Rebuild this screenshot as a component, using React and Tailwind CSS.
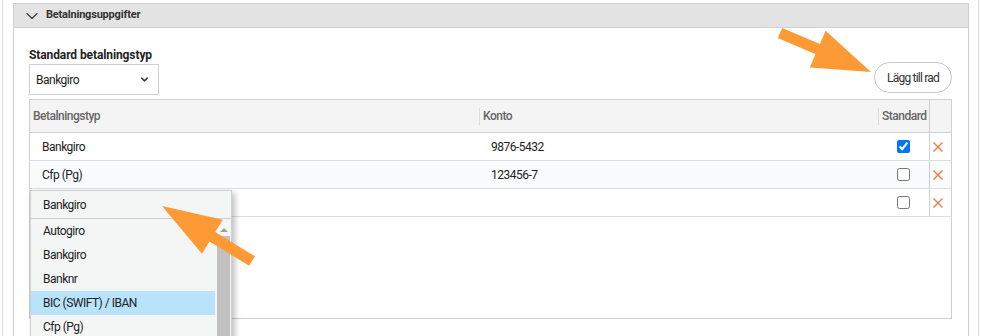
import React from 'react';
import { ChevronDown } from 'lucide-react';

const rows = [
  { typ: 'Bankgiro', konto: '9876-5432', std: true },
  { typ: 'Cfp (Pg)', konto: '123456-7', std: false, alt: true },
  { typ: '', konto: '', std: false },
];

const options = ['Autogiro', 'Bankgiro', 'Banknr', 'BIC (SWIFT) / IBAN', 'Cfp (Pg)'];

// arrow polygon from tail to tip
const arrowPoints = (tail, tip, headLen, headHalf, shaftHalf) => {
  const dx = tip[0] - tail[0];
  const dy = tip[1] - tail[1];
  const len = Math.hypot(dx, dy);
  const ux = dx / len;
  const uy = dy / len;
  const nx = -uy;
  const ny = ux;
  const bx = tip[0] - ux * headLen;
  const by = tip[1] - uy * headLen;
  const p = [
    [tail[0] + nx * shaftHalf, tail[1] + ny * shaftHalf],
    [bx + nx * shaftHalf, by + ny * shaftHalf],
    [bx + nx * headHalf, by + ny * headHalf],
    tip,
    [bx - nx * headHalf, by - ny * headHalf],
    [bx - nx * shaftHalf, by - ny * shaftHalf],
    [tail[0] - nx * shaftHalf, tail[1] - ny * shaftHalf],
  ];
  return p.map((q) => q.map((v) => v.toFixed(1)).join(',')).join(' ');
};

const DeleteX = () => (
  <svg width="10" height="10" viewBox="0 0 10 10">
    <path d="M0.5 0.5L9.5 9.5M9.5 0.5L0.5 9.5" stroke="#f2783f" strokeWidth="1.4" />
  </svg>
);

const App = () => {
  return (
    <div className="relative w-[981px] h-[336px] overflow-hidden bg-white text-[12px] text-[#222] font-['Roboto',sans-serif] tracking-[-0.5px]">
      <div className="ml-[2px] w-[977px] h-full border-l border-r border-[#dcdcdc] pl-[10px] pt-[3px]">
        <div className="w-[956px] h-[400px] border border-[#cfcfcf]">
          <div className="h-[24px] bg-[#e3e3e3] border-b border-[#cfcfcf] flex items-center pl-[8px]">
            <ChevronDown size={20} strokeWidth={1.3} className="text-[#333]" />
            <span className="ml-[4px] text-[11px] font-bold text-[#333] tracking-[-0.2px]">Betalningsuppgifter</span>
          </div>

          <div className="px-[15px] pt-[20px]">
            <div className="w-[923px] flex items-end justify-between">
              <div>
                <div className="font-bold leading-[14px] text-[#222] tracking-[-0.1px]">Standard betalningstyp</div>
                <div className="mt-[2px] w-[130px] h-[31px] border border-[#cfcfcf] flex items-center justify-between pl-[6px] pr-[8px]">
                  <span>Bankgiro</span>
                  <ChevronDown size={11} strokeWidth={3.5} className="text-[#444]" />
                </div>
              </div>
              <button className="mb-[2px] h-[31px] w-[78px] rounded-full border border-[#c8c8c8] bg-white text-[#333] tracking-[-0.8px]">
                Lägg till rad
              </button>
            </div>

            <div className="mt-[4px] w-[923px] h-[220px] border border-[#cfcfcf]">
              <div className="h-[33px] bg-[#f3f4f3] border-b border-[#cfcfcf] flex items-center font-medium text-[#666]">
                <div className="w-[449px] pl-[3px]">Betalningstyp</div>
                <div className="w-[399px] flex items-center">
                  <span className="w-px h-[17px] bg-[#dcdcdc]" />
                  <span className="ml-[3px]">Konto</span>
                </div>
                <div className="w-[51px] flex items-center">
                  <span className="w-px h-[17px] bg-[#dcdcdc]" />
                  <span className="ml-[3px]">Standard</span>
                </div>
                <div className="flex-1 h-full border-l border-[#cfcfcf]" />
              </div>
              {rows.map((r, i) => (
                <div
                  key={i}
                  className={`h-[28px] border-b border-[#dedede] flex items-center ${r.alt ? 'bg-[#f9fbfd]' : 'bg-white'}`}
                >
                  <div className="w-[449px] pl-[12px]">{r.typ}</div>
                  <div className="w-[399px] pl-[12px]">{r.konto}</div>
                  <div className="w-[51px] flex justify-center">
                    <input type="checkbox" checked={r.std} readOnly className="m-0 w-[13px] h-[13px]" />
                  </div>
                  <div className="flex-1 h-full border-l border-[#cfcfcf] flex items-center pl-[3px]">
                    <DeleteX />
                  </div>
                </div>
              ))}
            </div>
          </div>
        </div>
      </div>

      <div className="absolute left-[30px] top-[190px] w-[202px] h-[170px] bg-[#f4f6f5] border border-[#cfcfcf] shadow-[3px_3px_6px_rgba(0,0,0,0.25)]">
        <div className="h-[28px] border-b border-[#cfcfcf] flex items-center pl-[12px]">Bankgiro</div>
        <div className="flex">
          <div className="w-[184px]">
            {options.map((o) => (
              <div
                key={o}
                className={`h-[24px] flex items-center pl-[12px] ${o.startsWith('BIC') ? 'bg-[#b9e3fb]' : ''}`}
              >
                {o}
              </div>
            ))}
          </div>
          <div className="ml-[2px] w-[13px] flex flex-col items-center">
            <svg width="10" height="8" viewBox="0 0 10 8" className="mt-[7px]">
              <path d="M1 6L5 2L9 6Z" fill="#a0a0a0" />
            </svg>
            <div className="mt-[2px] w-[13px] h-[120px] bg-[#c1c1c1]" />
          </div>
        </div>
      </div>

      <svg className="absolute left-0 top-0 pointer-events-none" width="981" height="336">
        <polygon points={arrowPoints([780, 33], [871, 72], 58, 20, 5.5)} fill="#fd9a36" />
        <polygon points={arrowPoints([252, 261], [162, 206], 59, 20, 5.5)} fill="#fd9a36" />
      </svg>
    </div>
  );
};

export default App;
